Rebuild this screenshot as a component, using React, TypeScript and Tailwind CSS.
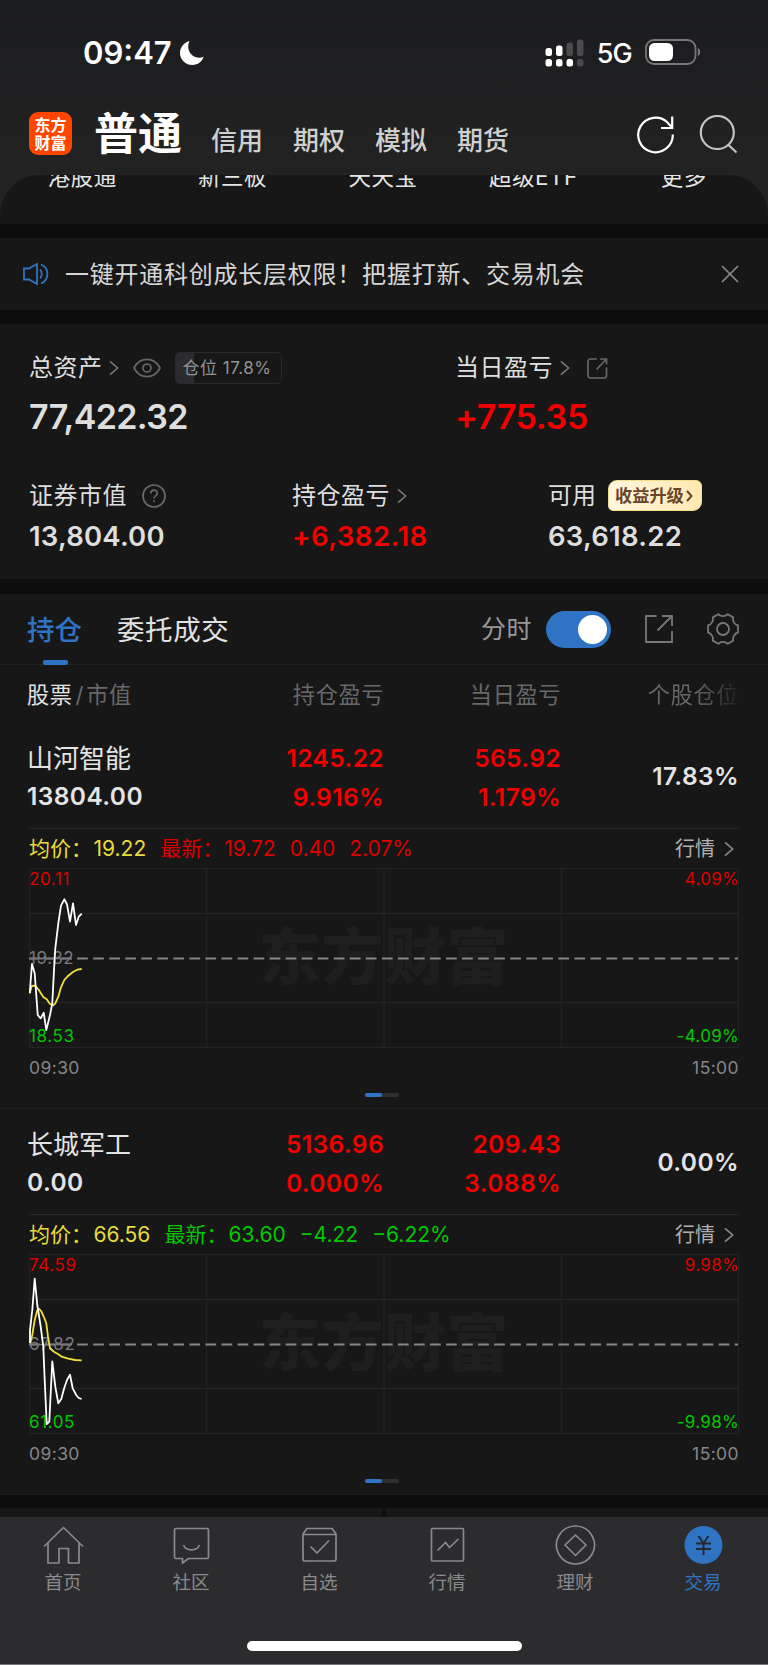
import React from 'react';

interface Quote {
  avg: string;
  last: string;
  change: string;
  percent: string;
  up: boolean;
}

interface Holding {
  name: string;
  value: string;
  profit: string;
  profitRate: string;
  dayProfit: string;
  dayRate: string;
  position: string;
  quote: Quote;
  high: string;
  mid: string;
  low: string;
  range: string;
  priceLine: string;
  avgLine: string;
}

const HOLDINGS: Holding[] = [
  {
    name: '山河智能',
    value: '13804.00',
    profit: '1245.22',
    profitRate: '9.916%',
    dayProfit: '565.92',
    dayRate: '1.179%',
    position: '17.83%',
    quote: { avg: '19.22', last: '19.72', change: '0.40', percent: '2.07%', up: true },
    high: '20.11',
    mid: '19.32',
    low: '18.53',
    range: '4.09%',
    priceLine:
      '0.7,125.3 3,96 5.7,105.3 8.7,147 11.7,150.3 14.7,144.7 17.3,162 21,147 23.3,135.3 25,102 26.3,80.3 29.3,55.3 32,37.7 35.3,31.3 38,36.3 41,53.7 44,35.3 47,57 49.7,48.7 52.7,45.7',
    avgLine:
      '0.7,125.3 2.7,118 6,117.7 9.3,121.3 14.3,129 17.7,131.3 21,136 24.3,137.3 26.3,135.3 29.3,128.7 32,119.3 35.3,112 39.3,107.7 44.3,103.7 48.3,101.7 52.7,101',
  },
  {
    name: '长城军工',
    value: '0.00',
    profit: '5136.96',
    profitRate: '0.000%',
    dayProfit: '209.43',
    dayRate: '3.088%',
    position: '0.00%',
    quote: { avg: '66.56', last: '63.60', change: '−4.22', percent: '−6.22%', up: false },
    high: '74.59',
    mid: '67.82',
    low: '61.05',
    range: '9.98%',
    priceLine:
      '1,89 1,76 3.3,56 5.7,24.7 8.3,51 11.7,72.7 14.3,92.7 16,132.7 17.7,170 20.3,167.7 21.7,139.3 23.3,107.3 26.3,132.7 29.3,149.3 32.3,145 35,134.7 38,126 41,120.7 43.7,134.3 47,140.7 49.7,144 52.7,145',
    avgLine:
      '1,89.3 3.3,81 5.7,66 8.3,56.3 10.3,55 12.3,57.3 15,63.3 17.3,69.3 19,82.7 21,94.3 25.3,98 29.3,100.3 32.7,102.7 39.3,104.7 46,106 52.7,106.3',
  },
];

const Chevron: React.FC<{ className?: string }> = ({ className = 'text-[#77777a]' }) => (
  <svg className={`h-4 w-[10px] ${className}`} viewBox="0 0 10 16" fill="none" stroke="currentColor" strokeWidth="1.6">
    <path d="M1 1.3 8.6 8 1 14.7" />
  </svg>
);

const StatusBar: React.FC = () => (
  <div className="flex h-[106px] items-center pr-[67px] pl-[83px]">
    <span className="text-[31px] leading-9 font-semibold text-white">09:47</span>
    <svg className="mt-[-1px] ml-[7px] h-[26px] w-[26px]" viewBox="0 0 26 26" fill="#fff">
      <path d="M10.5 1C9 4 8.6 8.4 10.6 12C13 16.6 18.5 19 24.6 16.8C23 21.8 18.8 25 13.5 25C6.5 25 1 19.6 1 12.9C1 7.5 4.8 2.6 10.5 1Z" />
    </svg>
    <svg className="ml-auto h-7 w-10" viewBox="0 0 40 28" fill="#fff">
      <rect x="0.5" y="9" width="6.5" height="8" rx="2.5" />
      <rect x="11" y="6.5" width="6.5" height="10.5" rx="2.5" />
      <rect x="21.5" y="3.5" width="6.5" height="13.5" rx="2.5" fill="#4b4b4d" />
      <rect x="32" y="0.5" width="6.5" height="16.5" rx="2.5" fill="#4b4b4d" />
      <rect x="0.5" y="20" width="6.5" height="7.5" rx="2.5" />
      <rect x="11" y="20" width="6.5" height="7.5" rx="2.5" />
      <rect x="21.5" y="20" width="6.5" height="7.5" rx="2.5" />
      <rect x="32" y="20" width="6.5" height="7.5" rx="2.5" fill="#4b4b4d" />
    </svg>
    <span className="mt-px ml-[12px] text-[27px] leading-8 font-medium tracking-[-0.8px] text-white">5G</span>
    <svg className="mt-[-2px] ml-[13px] h-[26px] w-[56px]" viewBox="0 0 56 26" fill="none">
      <rect x="1" y="1" width="49.5" height="24" rx="8" stroke="#77777a" strokeWidth="1.8" />
      <rect x="4" y="4" width="24" height="18" rx="5.5" fill="#fff" />
      <path d="M52.8 9C56 10.2 56 15.8 52.8 17Z" fill="#77777a" />
    </svg>
  </div>
);

const Header: React.FC = () => (
  <div className="flex h-[69px] pr-[30px] pl-[29px]">
    <div className="mt-[6px] flex h-[43px] w-[43px] flex-col items-center justify-center rounded-[9px] bg-[#ff4500] text-[16px] leading-[18px] font-bold text-white">
      <span>东方</span>
      <span>财富</span>
    </div>
    <span className="mt-px ml-[22px] text-[44px] leading-[54px] font-bold text-white">普通</span>
    <div className="mt-[15px] ml-[29px] flex gap-[30px] text-[26px] leading-[40px] font-medium text-[#cfcfcf]">
      <span>信用</span>
      <span>期权</span>
      <span>模拟</span>
      <span>期货</span>
    </div>
    <svg className="mt-[9px] ml-auto h-[40px] w-[40px]" viewBox="0 0 40 40" fill="none" stroke="#fff" strokeWidth="2.2">
      <path d="M37.8 19.5A17.3 17.3 0 1 1 32.8 7.800L37 12.600M37.2 1.5V13H26" />
    </svg>
    <svg className="mt-[9px] ml-[23px] h-[40px] w-[40px]" viewBox="0 0 40 40" fill="none" stroke="#c2c2c2" strokeWidth="2.2">
      <circle cx="19.3" cy="17.5" r="16.5" />
      <path d="m30 29.500 8.500 8" />
    </svg>
  </div>
);

const SHORTCUTS = ['港股通', '新三板', '天天宝', '超级ETF', '更多'];

const Shortcuts: React.FC = () => (
  <div className="h-[49px] overflow-hidden rounded-t-[40px] bg-[#171717]">
    <div className="mt-[-10px] grid grid-cols-5 pr-[9px] pl-[7px] text-center text-[22.5px] leading-6 tracking-[0.5px] text-[#e6e6e6]">
      {SHORTCUTS.map(item => (
        <span key={item}>{item}</span>
      ))}
    </div>
  </div>
);

const Notice: React.FC = () => (
  <div className="mt-[14px] flex h-[72px] items-center bg-[#171717] pr-[29px] pl-[23px]">
    <svg className="h-[24px] w-[26px]" viewBox="0 0 26 24" fill="none" stroke="#2f74c4" strokeWidth="1.8">
      <path d="M1 6.500H6L14 2V22L6 17.500H1ZM17 7.500C19.400 10 19.400 14 17 16.500M18 2.500C26.500 6 26.500 18 18 21.500" />
    </svg>
    <span className="mt-[2px] ml-[16px] text-[24px] tracking-[0.76px] text-[#d6d6d6]">一键开通科创成长层权限！把握打新、交易机会</span>
    <svg className="ml-auto h-[18px] w-[18px]" viewBox="0 0 18 18" stroke="#8a8a8d" strokeWidth="1.7">
      <path d="m1 1 16 16M17 1 1 17" />
    </svg>
  </div>
);

const Assets: React.FC = () => (
  <div className="mt-[14px] h-[255px] bg-[#171717] px-[29px] pt-[28px] text-[#dedede]">
    <div className="grid grid-cols-[426px_1fr]">
      <div>
        <div className="flex h-8 items-center text-[24px] tracking-[0.5px]">
          <span>总资产</span>
          <Chevron className="ml-[6px] text-[#77777a]" />
          <svg className="ml-[14px] h-[20px] w-[28px]" viewBox="0 0 28 20" fill="none" stroke="#68686b" strokeWidth="1.7">
            <path d="M1 10C7-1.500 21-1.500 27 10C21 21.500 7 21.500 1 10Z" />
            <circle cx="14" cy="10" r="4" />
          </svg>
          <div className="ml-[14px] flex h-8 w-[107px] items-center rounded-[5px] border border-[#2a2a2c] bg-[linear-gradient(to_right,#2c2c2f_18px,transparent_18px)] pt-[2px] pl-[7px] text-[17px] tracking-[0.5px] whitespace-pre text-[#929295]">
            仓位 17.8%
          </div>
        </div>
        <div className="mt-[12px] text-[34px] leading-[42px] font-semibold tracking-[-0.6px]">77,422.32</div>
      </div>
      <div>
        <div className="flex h-8 items-center text-[24px] tracking-[0.5px]">
          <span>当日盈亏</span>
          <Chevron className="ml-[7px] text-[#77777a]" />
          <svg className="ml-[17px] h-[21px] w-[21px]" viewBox="0 0 21 21" fill="none" stroke="#68686b" strokeWidth="1.7">
            <path d="M10 1H3.500A2.500 2.500 0 0 0 1 3.500V17.500A2.500 2.500 0 0 0 3.500 20H17A2.500 2.500 0 0 0 19.500 17.500V9.500M9.500 11.500 19 1.500M13 1H19.500V6.500" />
          </svg>
        </div>
        <div className="mt-[12px] text-[34px] leading-[42px] font-semibold tracking-[-0.3px] text-[#f20000]">+775.35</div>
      </div>
    </div>
    <div className="mt-[42px] grid grid-cols-[263px_256px_1fr]">
      <div>
        <div className="flex h-8 items-center text-[24px] tracking-[0.5px]">
          <span>证券市值</span>
          <svg className="ml-[15px] h-[24px] w-[24px]" viewBox="0 0 24 24" fill="none" stroke="#68686b" strokeWidth="1.7">
            <circle cx="12" cy="12" r="11" />
            <path d="M8.700 9.500C8.700 5 15.300 5 15.300 9.200C15.300 11.800 12 11.800 12 14.500M12 16.200V18" />
          </svg>
        </div>
        <div className="mt-[6px] text-[27.5px] leading-[36px] font-semibold tracking-[0.2px]">13,804.00</div>
      </div>
      <div>
        <div className="flex h-8 items-center text-[24px] tracking-[0.5px]">
          <span>持仓盈亏</span>
          <Chevron className="ml-[7px] text-[#77777a]" />
        </div>
        <div className="mt-[6px] text-[27.5px] leading-[36px] font-semibold tracking-[0.5px] text-[#f20000]">+6,382.18</div>
      </div>
      <div>
        <div className="flex h-8 items-center text-[24px]">
          <span>可用</span>
          <div className="mt-[-2px] ml-[12px] flex h-[31px] w-[94px] items-center rounded-tl-[9px] rounded-tr-[6px] rounded-br-[9px] rounded-bl-[5px] border border-[#f5e08a] bg-linear-to-r from-[#fff6e0] to-[#ffe9b0] pt-px pl-[6px] text-[17.2px] font-bold text-[#6b4429]">
            收益升级
            <svg className="ml-[2px] h-[12px] w-[7px]" viewBox="0 0 7 12" fill="none" stroke="#6b4429" strokeWidth="2">
              <path d="m1 1 4.500 5L1 11" />
            </svg>
          </div>
        </div>
        <div className="mt-[6px] text-[27.5px] leading-[36px] font-semibold tracking-[0.25px]">63,618.22</div>
      </div>
    </div>
  </div>
);

const Tabs: React.FC = () => (
  <div className="flex h-[71px] items-center border-b border-[#212121] pr-[29px] pl-[27px]">
    <div className="relative flex h-full items-center pt-[3px] text-[27.5px] font-medium text-[#2f74c4]">
      持仓
      <span className="absolute bottom-[-1px] left-[16px] h-[5px] w-[25px] rounded-[2px] bg-[#2f74c4]" />
    </div>
    <span className="mt-[3px] ml-[35px] text-[27.5px] tracking-[0.6px] text-[#e2e2e2]">委托成交</span>
    <span className="mt-[2px] ml-auto text-[25px] tracking-[0.5px] text-[#98989c]">分时</span>
    <div className="ml-[14px] flex h-[37px] w-[65px] items-center justify-end rounded-full bg-[#2f74c4] pr-[4px]">
      <div className="h-[29px] w-[29px] rounded-full bg-white" />
    </div>
    <svg className="ml-[34px] h-[28px] w-[28px]" viewBox="0 0 28 28" fill="none" stroke="#77777a" strokeWidth="1.8">
      <path d="M11.500 1H1V27H27V16M12.500 15.500 26.500 1.500M17 1H27V11" />
    </svg>
    <svg className="ml-[34px] h-[32px] w-[32px]" viewBox="0 0 32 32" fill="none" stroke="#77777a" strokeWidth="1.8">
      <circle cx="16" cy="16" r="6" />
      <path d="M11.300 1.200C13.500 3.700 18.500 3.700 20.700 1.200L26.200 4.400C25.200 7.500 27.600 11.800 31 12.500V19.500C27.600 20.200 25.200 24.500 26.200 27.600L20.700 30.800C18.500 28.300 13.500 28.300 11.300 30.800L5.800 27.600C6.800 24.500 4.400 20.200 1 19.500V12.500C4.400 11.800 6.800 7.500 5.800 4.400Z" strokeLinejoin="round" />
    </svg>
  </div>
);

const IntradayChart: React.FC<{ holding: Holding }> = ({ holding }) => (
  <div className="relative h-[180px] text-[17px] leading-5 tracking-[0.6px]">
    <div className="absolute inset-0 flex items-center justify-center text-[62px] leading-none font-black text-[#1e1e1e]">东方财富</div>
    <svg className="absolute inset-0 h-[180px] w-[710px]" viewBox="0 0 710 180" fill="none">
      <path d="M0.500 0.500H709.500V179.500H0.500ZM0 45.500H710M0 134.500H710M177.500 0V180M355 0V180M532.500 0V180" stroke="#222224" strokeWidth="1.3" />
      <path d="M0 90.500H709" stroke="#85858a" strokeWidth="1.8" strokeDasharray="10.7 5.34" />
      <path d="M0 90.500H43" stroke="#77777c" strokeWidth="1.4" />
    </svg>
    <span className="absolute top-[1px] left-0 text-[#dc0000]">{holding.high}</span>
    <span className="absolute top-[80px] left-0 text-[#77777c]">{holding.mid}</span>
    <span className="absolute top-[158px] left-0 text-[#00c800]">{holding.low}</span>
    <span className="absolute top-[1px] right-0 tracking-[0.3px] text-[#dc0000]">{holding.range}</span>
    <span className="absolute top-[158px] right-0 tracking-[0.3px] text-[#00c800]">-{holding.range}</span>
    <svg className="absolute inset-0 h-[180px] w-[710px]" viewBox="0 0 710 180" fill="none" strokeWidth="1.8" strokeLinejoin="round">
      <polyline points={holding.avgLine} stroke="#efe03a" />
      <polyline points={holding.priceLine} stroke="#fff" />
    </svg>
  </div>
);

const HoldingCard: React.FC<{ holding: Holding }> = ({ holding }) => {
  const { quote } = holding;

  return (
    <div className="h-[386px] border-b border-[#1e1e1e] pr-[29px] pl-[27px]">
      <div className="grid h-[105px] grid-cols-[181px_176px_177px_1fr] pt-[16px] text-[24.5px] font-semibold tracking-[0.4px]">
        <div className="text-[#e4e4e4]">
          <div className="h-[38px] text-[26px] leading-[40px] font-normal tracking-normal">{holding.name}</div>
          <div className="h-[38px] leading-[39px]">{holding.value}</div>
        </div>
        <div className="text-right leading-[38.5px] text-[#f20000]">
          <div>{holding.profit}</div>
          <div>{holding.profitRate}</div>
        </div>
        <div className="text-right leading-[38.5px] text-[#f20000]">
          <div>{holding.dayProfit}</div>
          <div>{holding.dayRate}</div>
        </div>
        <div className="flex h-[74px] items-center justify-end text-[#e4e4e4]">{holding.position}</div>
      </div>
      <div className="ml-[2px] flex h-[40px] items-center border-t border-[#262626] text-[21px]">
        <span className="text-[#e8dc3c]">
          均价：<span className="ml-[1.500px]">{quote.avg}</span>
        </span>
        <div className={`ml-[14px] flex gap-[14px] ${quote.up ? 'text-[#dc0000]' : 'text-[#00c800]'}`}>
          <span>
            最新：<span className="ml-px">{quote.last}</span>
          </span>
          <span>{quote.change}</span>
          <span>{quote.percent}</span>
        </div>
        <span className="ml-auto text-[20px] text-[#b0b0b3]">行情</span>
        <Chevron className="mr-[5px] ml-[9px] text-[#8a8a8d]" />
      </div>
      <div className="ml-[2px]">
        <IntradayChart holding={holding} />
        <div className="mt-[8px] flex justify-between text-[17.5px] leading-6 tracking-[0.4px] text-[#85858a]">
          <span>09:30</span>
          <span>15:00</span>
        </div>
      </div>
      <div className="mx-auto mt-[13px] h-[4px] w-[34px] translate-x-[-1px] rounded-full bg-[#303032]">
        <div className="h-full w-1/2 rounded-full bg-[#2f74c4]" />
      </div>
    </div>
  );
};

const Holdings: React.FC = () => (
  <div className="mt-[15px] h-[900px] bg-[#171717]">
    <Tabs />
    <div className="grid h-[58px] grid-cols-[181px_176px_177px_1fr] items-center pt-px pr-[29px] pl-[27px] text-[22.2px] tracking-[0.6px] text-[#68686b]">
      <div>
        <span className="text-[#e2e2e2]">股票</span>
        <span className="mr-[2px] ml-[3px]">/</span>
        <span>市值</span>
      </div>
      <span className="text-right">持仓盈亏</span>
      <span className="text-right">当日盈亏</span>
      <span className="bg-linear-to-r from-[#68686b] from-75% to-[#222] bg-clip-text text-right text-transparent">个股仓位</span>
    </div>
    {HOLDINGS.map(holding => (
      <HoldingCard key={holding.name} holding={holding} />
    ))}
  </div>
);

const NAV_ITEMS = [
  {
    label: '首页',
    icon: <path d="M1 20.500 20.500 1.500 40 20.500M5 17V37H16V22.500H25.500V37H36V17" />,
  },
  {
    label: '社区',
    icon: <path d="M5 2.500H36A1.500 1.500 0 0 1 37.500 4V31A1.500 1.500 0 0 1 36 32.500H17.500L11.500 37V32.500H5A1.500 1.500 0 0 1 3.500 31V4A1.500 1.500 0 0 1 5 2.500ZM12.500 19C15 25.500 26 25.500 28.500 19" />,
  },
  {
    label: '自选',
    icon: <path d="M8 2.500H33L37 8V33A2 2 0 0 1 35 35H6A2 2 0 0 1 4 33V8ZM4 8.500H37M11.500 20.500 18 27 30 14.500" />,
  },
  {
    label: '行情',
    icon: <path d="M5.500 2.500H35.500A1 1 0 0 1 36.500 3.500V34A1 1 0 0 1 35.500 35H5.500A1 1 0 0 1 4.500 34V3.500A1 1 0 0 1 5.500 2.500ZM10.500 24.500 18.500 16.500 22.500 21.500 31.500 13" />,
  },
  {
    label: '理财',
    icon: <path d="M20.500 0A19 19 0 1 1 20.400 0ZM20.500 9 31 19 20.500 29.500 10 19Z" />,
  },
];

const NavBar: React.FC = () => (
  <div className="h-[148px] border-b border-[#77777a] bg-[#2c2c2e] pt-[8px]">
    <div className="grid grid-cols-6 text-[18.5px] leading-7 text-[#8a8a8e]">
      {NAV_ITEMS.map(item => (
        <div key={item.label} className="flex flex-col items-center">
          <svg className="mr-px h-[43px] w-[41px] overflow-visible" viewBox="0 -1 41 43" fill="none" stroke="currentColor" strokeWidth="1.7" strokeLinejoin="round">
            {item.icon}
          </svg>
          <span className="mr-[2px]">{item.label}</span>
        </div>
      ))}
      <div className="flex flex-col items-center text-[#2f74c4]">
        <svg className="mr-px h-[43px] w-[41px]" viewBox="0 -1 41 43" fill="none">
          <circle cx="20.5" cy="19" r="19" fill="#2f74c4" />
          <path d="M15.500 10 20.500 17.500 25.500 10M13 17.500H28M13 23H28M20.500 17V29" stroke="#26282c" strokeWidth="2" />
        </svg>
        <span className="mr-[2px]">交易</span>
      </div>
    </div>
    <div className="mx-auto mt-[45px] h-[10px] w-[275px] rounded-full bg-white" />
  </div>
);

const App: React.FC = () => (
  <div className="h-[1665px] w-[768px] overflow-hidden bg-[#0d0d0d] font-[Inter,'Noto_Sans_CJK_SC',sans-serif]">
    <div className="bg-linear-to-b from-[#1b1c1e] to-[#242424]">
      <StatusBar />
      <Header />
      <Shortcuts />
    </div>
    <Notice />
    <Assets />
    <Holdings />
    <div className="mt-[14px] grid h-[9px] grid-cols-2 gap-[4px]">
      <div className="bg-[#171717]" />
      <div className="bg-[#171717]" />
    </div>
    <NavBar />
  </div>
);

export default App;
